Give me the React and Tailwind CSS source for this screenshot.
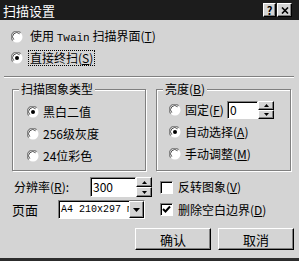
import React from 'react'

const raised = 'border border-t-white border-l-white border-b-black border-r-black shadow-[inset_-1px_-1px_0_#808080] bg-[#d4d4d4]'
const sunken = 'border border-t-[#808080] border-l-[#808080] border-b-white border-r-white shadow-[inset_1px_1px_0_#000] bg-white'

function Radio({ checked }) {
  return (
    <svg width="12" height="12" viewBox="0 0 12 12" className="shrink-0">
      <circle cx="6" cy="6" r="5.5" fill="#fff" />
      <path d="M1.8 9.6 A5 5 0 0 1 9.6 1.8" stroke="#808080" strokeWidth="1.2" fill="none" />
      <path d="M2.8 8.6 A3.6 3.6 0 0 1 8.6 2.8" stroke="#000" strokeWidth="1" fill="none" opacity="0.7" />
      {checked && <circle cx="6" cy="6" r="2" fill="#000" />}
    </svg>
  )
}

function Check({ checked }) {
  return (
    <div className={`w-[13px] h-[13px] shrink-0 flex items-center justify-center ${sunken}`}>
      {checked && (
        <svg width="9" height="9" viewBox="0 0 9 9">
          <path d="M1 4 L3.5 6.5 L8 1.5" stroke="#000" strokeWidth="2" fill="none" />
        </svg>
      )}
    </div>
  )
}

function Arrow({ down }) {
  return (
    <svg width="5" height="3" viewBox="0 0 5 3">
      <path d={down ? 'M0 0 H5 L2.5 3 Z' : 'M0 3 H5 L2.5 0 Z'} fill="#000" />
    </svg>
  )
}

function Spinner() {
  return (
    <div className="flex flex-col w-[16px] h-full">
      <div className={`flex-1 flex items-center justify-center ${raised}`}><Arrow /></div>
      <div className={`flex-1 flex items-center justify-center ${raised}`}><Arrow down /></div>
    </div>
  )
}

function Key({ k }) {
  return <span>(<u>{k}</u>)</span>
}

function Group({ label, width, children, pad }) {
  return (
    <div className={`relative h-[82px] border border-[#808080] shadow-[inset_1px_1px_0_#fff,1px_1px_0_#fff] ${width}`}>
      <span className="absolute -top-[8px] left-[6px] px-[2px] bg-[#d4d4d4] text-[12px] leading-[14px]">{label}</span>
      <div className={`flex flex-col gap-[2px] ${pad}`}>{children}</div>
    </div>
  )
}

export default function App() {
  return (
    <div className="w-[299px] h-[261px] bg-[#d4d4d4] overflow-hidden flex flex-col border-b-[3px] border-[#2c2c2c] text-[12px] text-black leading-none font-['Noto_Sans_CJK_SC','Liberation_Sans',sans-serif]">
      {/* title */}
      <div className="h-[20px] shrink-0 bg-[#1c1c1c] flex items-center pl-[3px] pr-[7px]">
        <span className="text-white text-[13px] flex-1">扫描设置</span>
        <div className="flex gap-[1px]">
          <div className={`w-[13px] h-[14px] flex items-center justify-center text-[11px] font-bold ${raised}`}>?</div>
          <div className={`w-[15px] h-[14px] flex items-center justify-center ${raised}`}>
            <svg width="8" height="7" viewBox="0 0 8 7"><path d="M1 0.5 L7 6.5 M7 0.5 L1 6.5" stroke="#000" strokeWidth="1.6" /></svg>
          </div>
        </div>
      </div>

      <div className="mt-[8px] h-[18px] flex items-center pl-[11px] gap-[7px]">
        <Radio />
        <span>使用 <span className="font-['Liberation_Mono',monospace] text-[11px]">Twain</span> 扫描界面<Key k="T" /></span>
      </div>
      <div className="mt-[3px] h-[18px] flex items-center pl-[11px] gap-[5px]">
        <Radio checked />
        <span className="border border-dotted border-black px-[1px] py-[1px]">直接终扫<Key k="S" /></span>
      </div>

      <div className="mt-[9px] mx-[4px] mr-[5px] h-[2px] border-t border-t-[#808080] border-b border-b-white" />

      <div className="mt-[11px] flex pl-[12px] gap-[10px]">
        <Group label="扫描图象类型" width="w-[134px]" pad="pt-[12px] pl-[14px]">
          <div className="h-[20px] flex items-center gap-[4px]"><Radio checked /><span>黑白二值</span></div>
          <div className="h-[20px] flex items-center gap-[4px]"><Radio /><span>256级灰度</span></div>
          <div className="h-[20px] flex items-center gap-[4px]"><Radio /><span>24位彩色</span></div>
        </Group>
        <Group label={<span>亮度<Key k="B" /></span>} width="w-[135px]" pad="pt-[10px] pl-[12px]">
          <div className="h-[20px] flex items-center">
            <Radio />
            <span className="ml-[4px] w-[42px]">固定<Key k="F" /></span>
            <div className="flex h-[18px]">
              <div className={`w-[31px] h-full flex items-center pl-[2px] text-[12px] ${sunken}`}>0</div>
              <Spinner />
            </div>
          </div>
          <div className="h-[20px] flex items-center gap-[4px]"><Radio checked /><span>自动选择<Key k="A" /></span></div>
          <div className="h-[20px] flex items-center gap-[4px]"><Radio /><span>手动调整<Key k="M" /></span></div>
        </Group>
      </div>

      <div className="mt-[6px] h-[20px] flex items-center">
        <div className="w-[90px] pl-[14px]">分辨率<Key k="R" />:</div>
        <div className={`w-[46px] h-full flex items-center pl-[2px] ${sunken}`}>300</div>
        <Spinner />
        <div className="ml-[8px]"><Check /></div>
        <span className="ml-[5px]">反转图象<Key k="V" /></span>
      </div>

      <div className="mt-[3px] h-[19px] flex items-center">
        <div className="w-[58px] pl-[12px] text-[13px]">页面</div>
        <div className={`w-[87px] h-full flex items-center ${sunken}`}>
          <span className="flex-1 overflow-hidden whitespace-nowrap pl-[2px] font-['Liberation_Mono',monospace] text-[10px]">A4 210x297 mm</span>
          <div className={`w-[15px] h-full flex items-center justify-center ${raised}`}>
            <svg width="7" height="4" viewBox="0 0 7 4"><path d="M0 0 H7 L3.5 4 Z" fill="#000" /></svg>
          </div>
        </div>
        <div className="ml-[15px]"><Check checked /></div>
        <span className="ml-[5px]">删除空白边界<Key k="D" /></span>
      </div>

      <div className="mt-[9px] flex pl-[135px] gap-[7px]">
        <div className={`w-[76px] h-[22px] flex items-center justify-center text-[13px] ${raised}`}>确认</div>
        <div className={`w-[76px] h-[22px] flex items-center justify-center text-[13px] ${raised}`}>取消</div>
      </div>
    </div>
  )
}
